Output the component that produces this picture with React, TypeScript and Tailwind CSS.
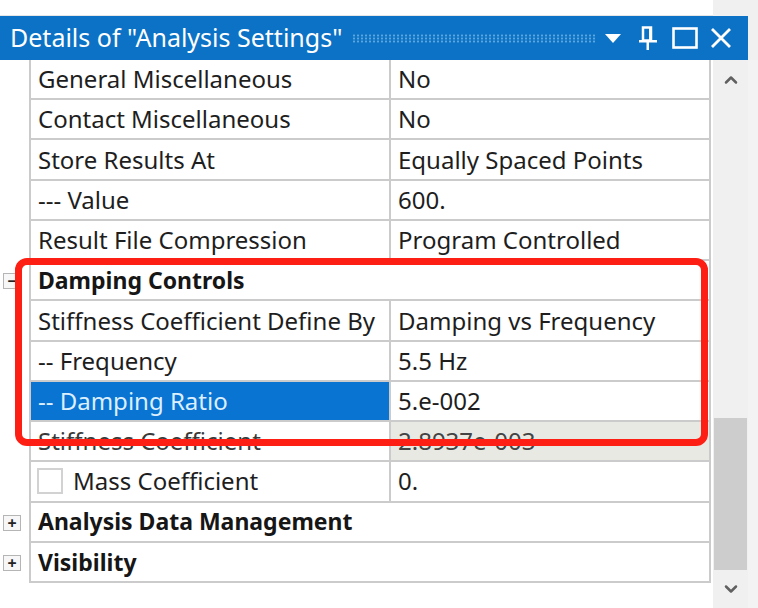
import { ChevronUp, ChevronDown } from 'lucide-react';

type Row =
  | { kind: 'cat'; label: string; open: boolean }
  | { kind: 'prop'; label: string; value: string; state?: 'selected' | 'disabled'; check?: boolean };

const rows: Row[] = [
  { kind: 'prop', label: 'General Miscellaneous', value: 'No' },
  { kind: 'prop', label: 'Contact Miscellaneous', value: 'No' },
  { kind: 'prop', label: 'Store Results At', value: 'Equally Spaced Points' },
  { kind: 'prop', label: '--- Value', value: '600.' },
  { kind: 'prop', label: 'Result File Compression', value: 'Program Controlled' },
  { kind: 'cat', label: 'Damping Controls', open: true },
  { kind: 'prop', label: 'Stiffness Coefficient Define By', value: 'Damping vs Frequency' },
  { kind: 'prop', label: '-- Frequency', value: '5.5 Hz' },
  { kind: 'prop', label: '-- Damping Ratio', value: '5.e-002', state: 'selected' },
  { kind: 'prop', label: 'Stiffness Coefficient', value: '2.8937e-003', state: 'disabled' },
  { kind: 'prop', label: 'Mass Coefficient', value: '0.', check: true },
  { kind: 'cat', label: 'Analysis Data Management', open: false },
  { kind: 'cat', label: 'Visibility', open: false },
];

function ExpandBox({ open }: { open: boolean }) {
  return (
    <div className="w-[18px] h-[16px] border border-[#b5b5b5] bg-[#f7f7f7] flex items-center justify-center text-[#222] text-[16px] leading-none font-bold">
      {open ? '−' : '+'}
    </div>
  );
}

function TitleIcons() {
  return (
    <div className="flex items-center h-full">
      <svg width="18" height="11" viewBox="0 0 18 11" className="ml-[2px]">
        <polygon points="1,1 17,1 9,10" fill="white" />
      </svg>
      <svg width="20" height="24" viewBox="0 0 20 24" className="ml-[16px]">
        <rect x="5" y="1.5" width="8" height="13" fill="none" stroke="white" strokeWidth="2.5" />
        <rect x="11" y="1" width="3" height="14" fill="white" />
        <rect x="1" y="14" width="18" height="2.5" fill="white" />
        <rect x="8.5" y="15" width="2.5" height="9" fill="white" />
      </svg>
      <svg width="26" height="22" viewBox="0 0 26 22" className="ml-[14px]">
        <rect x="1.5" y="1.5" width="23" height="19" fill="none" stroke="white" strokeWidth="2.6" />
      </svg>
      <svg width="22" height="20" viewBox="0 0 22 20" className="ml-[12px]">
        <path d="M2 1 L20 19 M20 1 L2 19" stroke="white" strokeWidth="2.8" />
      </svg>
    </div>
  );
}

export default function App() {
  return (
    <div className="relative w-[758px] h-[608px] overflow-hidden bg-white font-['Noto_Sans','Open_Sans',sans-serif] text-[#1e1e1e]">
      {/* top strip */}
      <div className="flex h-[16px]">
        <div className="w-[713px] bg-white border-b border-[#e6e6e6]" />
        <div className="flex-1 bg-[#f0f0f0]" />
      </div>

      {/* title bar */}
      <div className="flex h-[44px]">
        <div className="w-[748px] bg-[#0b72c5] flex items-center pl-[10px] pr-[16px]">
          <span className="text-white text-[25px] whitespace-nowrap">Details of "Analysis Settings"</span>
          <div className="flex-1 h-[9px] ml-[10px] mr-[6px] bg-[radial-gradient(circle,#5ea6e0_1px,transparent_1.2px)] bg-[length:4px_3px]" />
          <TitleIcons />
        </div>
        <div className="flex-1 bg-[#f0f0f0]" />
      </div>

      {/* body */}
      <div className="flex h-[548px]">
        <div className="w-[713px] flex flex-col">
          <div className="h-[523px] flex flex-col">
            {rows.map((r, i) => (
              <div key={i} className="flex-1 flex min-h-0">
                <div className="w-[29px] flex items-center justify-start pl-[3px]">
                  {r.kind === 'cat' && <ExpandBox open={r.open} />}
                </div>
                {r.kind === 'cat' ? (
                  <div className="w-[682px] border-x-2 border-b-2 border-[#cbcbcb] flex items-center pl-[7px] font-bold text-[23px] text-[#161616] whitespace-nowrap">
                    {r.label}
                  </div>
                ) : (
                  <div className="w-[682px] border-x-2 border-b-2 border-[#cbcbcb] flex text-[24px]">
                    <div
                      className={
                        'w-[360px] border-r-2 border-[#cbcbcb] flex items-center pl-[7px] whitespace-nowrap overflow-hidden ' +
                        (r.state === 'selected' ? 'bg-[#0a74d2] text-[#dcefff]' : r.state === 'disabled' ? 'text-[#3a3a3a]' : '')
                      }
                    >
                      {r.check && <div className="w-[26px] h-[26px] border-2 border-[#d2d2d2] bg-white mr-[10px] ml-[-1px]" />}
                      {r.label}
                    </div>
                    <div
                      className={
                        'flex-1 flex items-center pl-[7px] whitespace-nowrap ' +
                        (r.state === 'disabled' ? 'bg-[#e9e9e4] text-[#444]' : '')
                      }
                    >
                      {r.value}
                    </div>
                  </div>
                )}
              </div>
            ))}
          </div>
          <div className="flex-1" />
        </div>

        {/* scrollbar */}
        <div className="w-[35px] bg-[#f0f0f0] flex flex-col items-center">
          <div className="h-[40px] flex items-center justify-center text-[#606060]">
            <ChevronUp size={20} strokeWidth={3} />
          </div>
          <div className="flex-1 w-full flex flex-col">
            <div className="h-[318px]" />
            <div className="h-[152px] mx-[1px] bg-[#cdcdcd]" />
          </div>
          <div className="h-[38px] flex items-center justify-center text-[#606060]">
            <ChevronDown size={20} strokeWidth={3} />
          </div>
        </div>
        <div className="flex-1 bg-[#f3f3f3]" />
      </div>

      {/* red highlight annotation */}
      <div className="absolute left-[15px] top-[258px] w-[693px] h-[188px] border-[7px] border-[#fd1f14] rounded-[12px] pointer-events-none" />
    </div>
  );
}
